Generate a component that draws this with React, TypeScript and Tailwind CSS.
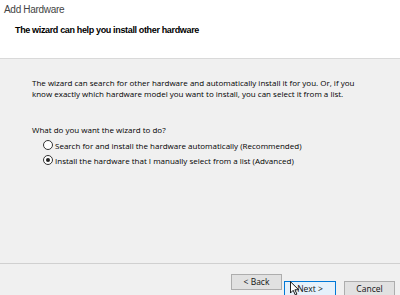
const Radio = ({ checked }: { checked?: boolean }) => (
  <span className="w-[10px] h-[10px] rounded-full border border-[#333] bg-white flex items-center justify-center shrink-0">
    {checked && <span className="w-[4px] h-[4px] rounded-full bg-[#222]" />}
  </span>
);

const Button = ({ label, focused }: { label: string; focused?: boolean }) => (
  <button
    className={`h-[16px] text-[8.5px] leading-none text-[#111] border ${
      focused ? 'w-[52px] bg-[#e5f1fb] border-[#0078d7]' : 'w-[51px] bg-[#e1e1e1] border-[#adadad]'
    }`}
  >
    {label}
  </button>
);

const Cursor = () => (
  <svg className="absolute left-[290px] top-[281px]" width="10" height="15" viewBox="0 0 11 16">
    <path d="M0.5 0.5 L0.5 13 L3.5 10 L5.8 15 L7.6 14.2 L5.4 9.4 L9.5 9.4 Z" fill="#fff" stroke="#000" strokeWidth="1" />
  </svg>
);

const App = () => {
  return (
    <div className="w-[400px] h-[295px] relative overflow-hidden flex flex-col bg-[#f0f0f0] font-['Open_Sans',sans-serif]">
      {/* header */}
      <header className="h-[59px] bg-white border-b border-[#d9d9d9] shrink-0 font-['Liberation_Sans',sans-serif]">
        <div className="pl-[4px] pt-[4px] text-[10px] leading-[12px] text-[#444] tracking-[-0.3px]">Add Hardware</div>
        <div className="pl-[15px] pt-[8px] text-[9px] leading-[12px] font-bold text-black tracking-[-0.35px]">
          The wizard can help you install other hardware
        </div>
      </header>

      {/* body */}
      <main className="flex-1 pl-[32px] pt-[18px] text-[8px] leading-[11px] text-black">
        <p>
          The wizard can search for other hardware and automatically install it for you. Or, if you
          <br />
          know exactly which hardware model you want to install, you can select it from a list.
        </p>
        <p className="mt-[25px]">What do you want the wizard to do?</p>
        <div className="flex flex-col gap-[5px] mt-[5px] pl-[11px]">
          <label className="flex items-center gap-[2px] h-[10px]">
            <Radio />
            <span>Search for and install the hardware automatically (Recommended)</span>
          </label>
          <label className="flex items-center gap-[2px] h-[10px]">
            <Radio checked />
            <span>Install the hardware that I manually select from a list (Advanced)</span>
          </label>
        </div>
      </main>

      {/* footer */}
      <footer className="h-[32px] border-t border-[#d0d0d0] shrink-0 flex items-start justify-end pt-[10px] pr-[5px]">
        <div className="flex">
          <Button label="< Back" />
          <div className="ml-[2px]">
            <Button label="Next >" focused />
          </div>
          <div className="ml-[8px]">
            <Button label="Cancel" />
          </div>
        </div>
      </footer>

      <Cursor />
    </div>
  );
};

export default App;
